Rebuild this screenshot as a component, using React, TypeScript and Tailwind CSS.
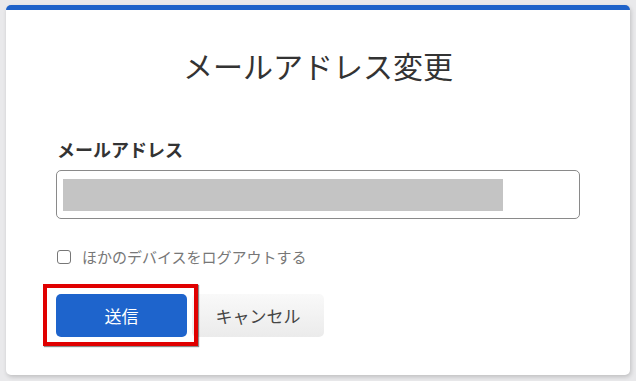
import React from "react";

export default function App() {
  return (
    <div
      className="w-[636px] h-[381px] bg-[#e9e9eb] pt-[5px] px-[6px] pb-[6px] overflow-hidden"
      style={{ fontFamily: '"Noto Sans CJK JP", "Noto Sans", sans-serif' }}
    >
      <div className="h-[370px] bg-white rounded-[5px] border-t-[5px] border-[#1e62c9] shadow-[1px_2px_4px_rgba(0,0,0,0.18)] px-[50px] pt-[35px]">
        <h1 className="text-center text-[30px] leading-[40px] text-[#333] font-normal">
          メールアドレス変更
        </h1>
        <div className="mt-[52px] text-[18px] leading-[24px] font-bold text-[#333] pl-[1px]">
          メールアドレス
        </div>
        <div className="mt-[9px] h-[49px] border border-[#8a8a8a] rounded-[5px] pl-[6px] pt-[8px]">
          <div className="w-[440px] h-[32px] bg-[#c4c4c4]" />
        </div>
        <label className="mt-[28px] flex items-center gap-[11px] h-[20px]">
          <span className="w-[14px] h-[14px] border border-[#777] rounded-[3px] bg-white ml-[1px]" />
          <span className="text-[15px] leading-[20px] text-[#777]">
            ほかのデバイスをログアウトする
          </span>
        </label>
        <div className="mt-[27px] flex gap-[5px]">
          <div className="relative">
            <div className="absolute -left-[13px] -top-[10px] w-[155px] h-[62px] border-[4px] border-[#e00000] shadow-[1px_1px_1px_rgba(0,0,0,0.45)]" />
            <button className="relative w-[131px] h-[43px] rounded-[5px] bg-[#1e64cc] text-white text-[17px]">
              送信
            </button>
          </div>
          <button className="w-[132px] h-[43px] rounded-[5px] bg-gradient-to-b from-[#f9f9f9] to-[#ebebeb] text-[#444] text-[17px]">
            キャンセル
          </button>
        </div>
      </div>
    </div>
  );
}
